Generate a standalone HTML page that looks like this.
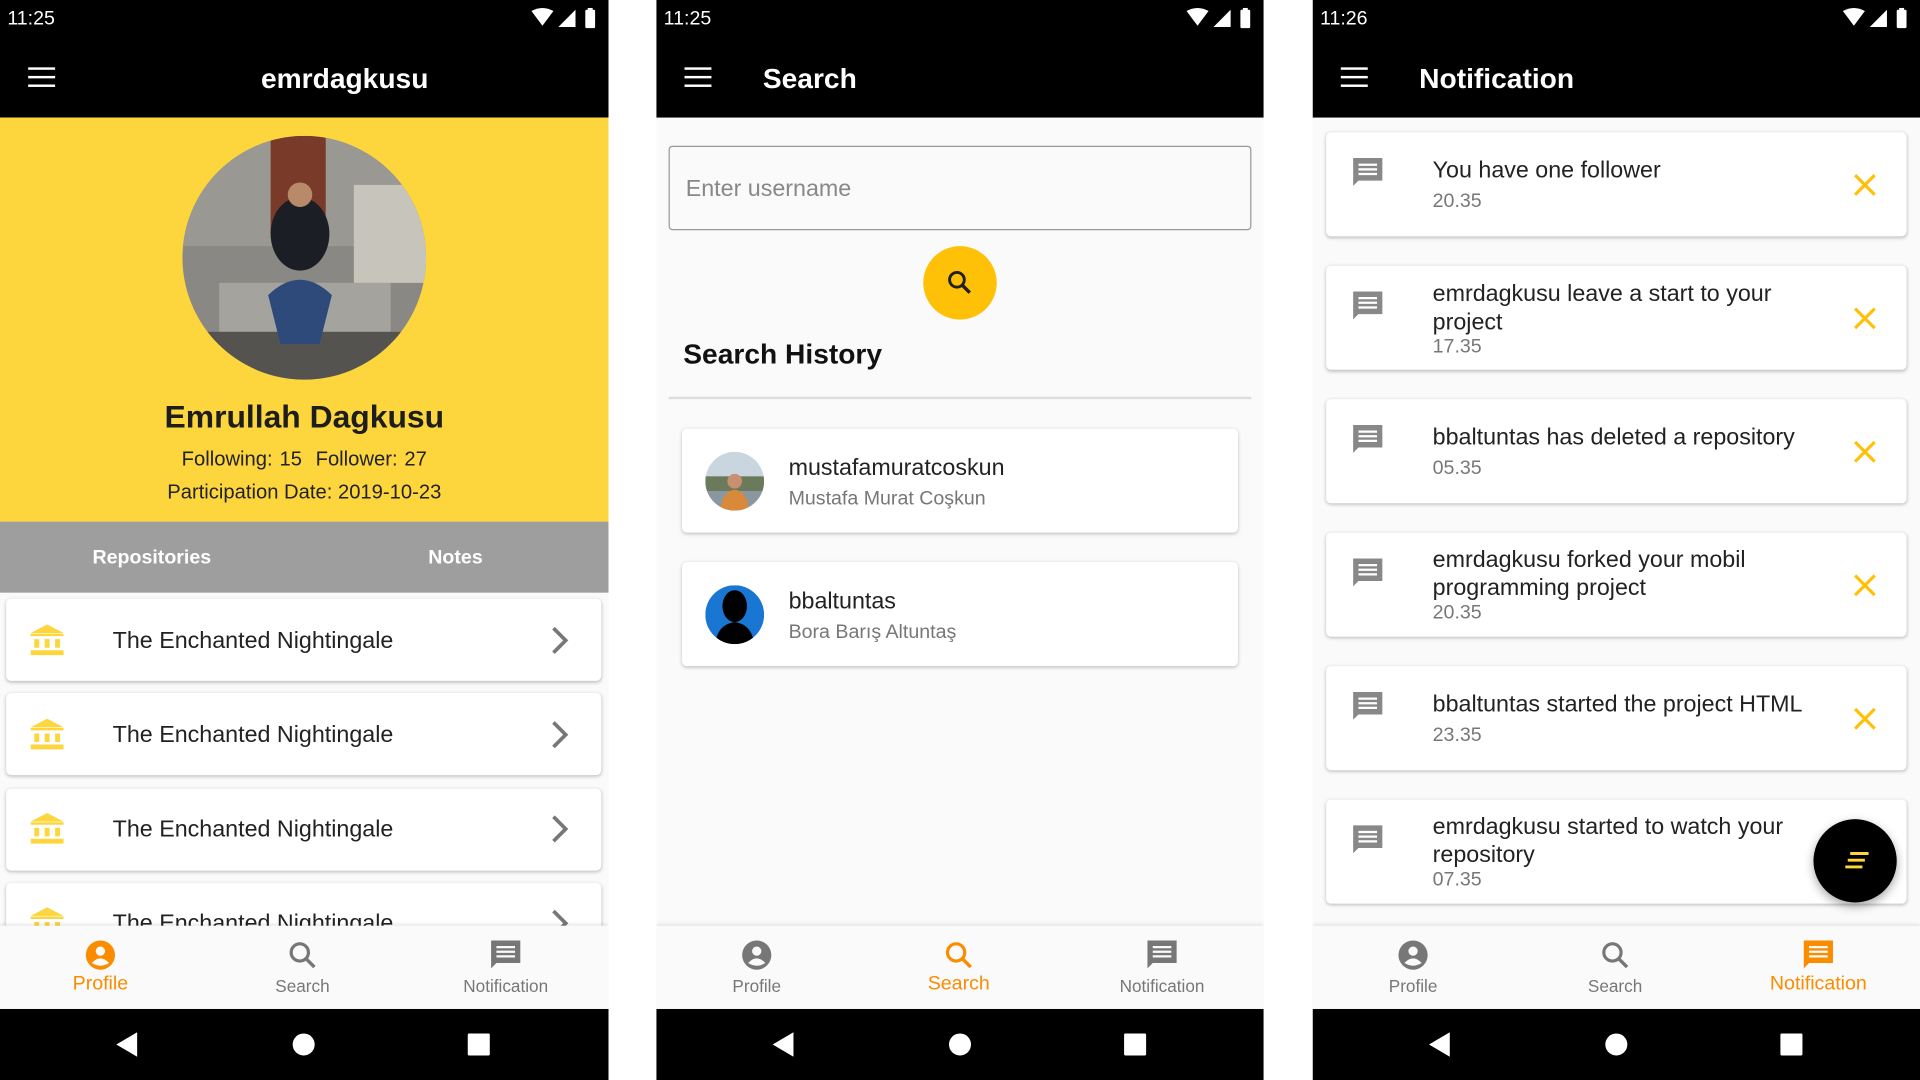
<!DOCTYPE html>
<html><head><meta charset="utf-8"><style>
*{margin:0;padding:0;box-sizing:border-box}
html,body{width:1920px;height:1080px;overflow:hidden;background:#fff;font-family:"Liberation Sans",Arial,sans-serif}
#w{position:absolute;left:0;top:0;width:1568px;height:882px;transform:scale(1.2244898);transform-origin:0 0}
.p{position:absolute;top:0;height:882px;width:497px;background:#fafafa;overflow:hidden}
.a{position:absolute}
.sb{position:absolute;left:0;top:0;width:100%;height:96px;background:#000}
.time{position:absolute;left:6px;top:7px;color:#fff;font-size:16px}
.ham{position:absolute;left:23px;top:55px;width:22px;height:16px}
.ham i{display:block;height:2.4px;background:#fff;margin-bottom:4.4px}
.title{position:absolute;top:48px;color:#fff;font-size:23px;font-weight:bold;line-height:32px}
.bn{position:absolute;left:0;top:756px;width:100%;height:68px;background:#fafafa;box-shadow:0 -1px 3px rgba(0,0,0,.12)}
.nv{position:absolute;left:0;top:824px;width:100%;height:58px;background:#000}
.it{position:absolute;top:0;width:120px;text-align:center;font-size:14px;color:#777}
.it svg{display:block;margin:11px auto 0}
.it span{display:block;margin-top:4px}
.on{color:#fb8c00;font-size:16px}
.on span{margin-top:2px}
.card{position:absolute;background:#fff;border-radius:4px;box-shadow:0 1px 3px rgba(0,0,0,.25)}
.t18{font-size:19px;color:#222;position:absolute;white-space:nowrap}
.g{color:#777;font-size:16px;position:absolute;white-space:nowrap}
</style></head><body><div id="w">

<!-- PANEL 1 -->
<div class="p" style="left:0">
<div class="sb"></div>
<div class="time">11:25</div>
<svg class="a" style="left:432px;top:6px" width="60" height="18" viewBox="0 0 60 18"><path d="M2 3 Q11 -2 20 3 L11 15Z" fill="#fff"/><path d="M38 2 V16 H24Z" fill="#fff"/><rect x="46" y="2" width="8" height="15" rx="1" fill="#fff"/><rect x="48" y="0.5" width="4" height="2" fill="#fff"/></svg>
<div class="ham"><i></i><i></i><i></i></div>
<div class="title" style="left:0;width:563px;text-align:center">emrdagkusu</div>
<div class="a" style="left:0;top:96px;width:497px;height:330px;background:#fdd63d"></div>
<svg class="a" style="left:149px;top:111px" width="199" height="199" viewBox="0 0 199 199">
<defs><clipPath id="c1"><circle cx="99.5" cy="99.5" r="99.5"/></clipPath></defs>
<g clip-path="url(#c1)"><rect width="199" height="199" fill="#8a8884"/><rect x="0" y="0" width="199" height="90" fill="#9a9893"/><rect x="72" y="0" width="45" height="80" fill="#7a3a2a"/><rect x="30" y="120" width="140" height="40" fill="#a5a39e"/><rect x="0" y="160" width="199" height="40" fill="#55534f"/><ellipse cx="96" cy="80" rx="24" ry="30" fill="#1c1e26"/><circle cx="96" cy="48" r="10" fill="#b88a6a"/><path d="M70 130 Q96 105 122 130 L112 170 L80 170Z" fill="#2d4a7a"/><rect x="140" y="40" width="59" height="80" fill="#c7c4bc"/></g></svg>
<div class="a" style="left:0;width:497px;top:325px;text-align:center;font-size:26px;font-weight:bold;color:#1d1d1d">Emrullah Dagkusu</div>
<div class="a" style="left:0;width:497px;top:366px;text-align:center;font-size:16.5px;color:#222;word-spacing:1px">Following: 15&nbsp; Follower: 27</div>
<div class="a" style="left:0;width:497px;top:393px;text-align:center;font-size:16.5px;color:#222">Participation Date: 2019-10-23</div>
<div class="a" style="left:0;top:426px;width:497px;height:58px;background:#9e9e9e"></div>
<div class="a" style="left:0;width:248px;top:447px;text-align:center;color:#fff;font-size:16px;font-weight:bold">Repositories</div>
<div class="a" style="left:248px;width:248px;top:447px;text-align:center;color:#fff;font-size:16px;font-weight:bold">Notes</div>
<div class="card" style="left:5px;top:489px;width:486px;height:67px"></div>
<div class="card" style="left:5px;top:566px;width:486px;height:67px"></div>
<div class="card" style="left:5px;top:644px;width:486px;height:67px"></div>
<div class="card" style="left:5px;top:721px;width:486px;height:67px"></div>
<svg class="a" style="left:25px;top:510px" width="27" height="26" viewBox="0 0 27 26"><path d="M13.5 0 L27 7 H0Z M0 7.5h27v2H0Z M3 12h4v7H3Z M11.5 12h4v7h-4Z M20 12h4v7h-4Z M0 21h27v4H0Z" fill="#fdd63d"/></svg>
<svg class="a" style="left:25px;top:587px" width="27" height="26" viewBox="0 0 27 26"><path d="M13.5 0 L27 7 H0Z M0 7.5h27v2H0Z M3 12h4v7H3Z M11.5 12h4v7h-4Z M20 12h4v7h-4Z M0 21h27v4H0Z" fill="#fdd63d"/></svg>
<svg class="a" style="left:25px;top:664px" width="27" height="26" viewBox="0 0 27 26"><path d="M13.5 0 L27 7 H0Z M0 7.5h27v2H0Z M3 12h4v7H3Z M11.5 12h4v7h-4Z M20 12h4v7h-4Z M0 21h27v4H0Z" fill="#fdd63d"/></svg>
<svg class="a" style="left:25px;top:741px" width="27" height="26" viewBox="0 0 27 26"><path d="M13.5 0 L27 7 H0Z M0 7.5h27v2H0Z M3 12h4v7H3Z M11.5 12h4v7h-4Z M20 12h4v7h-4Z M0 21h27v4H0Z" fill="#fdd63d"/></svg>
<div class="t18" style="left:92px;top:513px">The Enchanted Nightingale</div>
<div class="t18" style="left:92px;top:590px">The Enchanted Nightingale</div>
<div class="t18" style="left:92px;top:667px">The Enchanted Nightingale</div>
<div class="t18" style="left:92px;top:744px">The Enchanted Nightingale</div>
<svg class="a" style="left:448px;top:511px" width="20" height="24"><path d="M4 2 L14 12 L4 22" stroke="#777" stroke-width="3" fill="none"/></svg>
<svg class="a" style="left:448px;top:588px" width="20" height="24"><path d="M4 2 L14 12 L4 22" stroke="#777" stroke-width="3" fill="none"/></svg>
<svg class="a" style="left:448px;top:665px" width="20" height="24"><path d="M4 2 L14 12 L4 22" stroke="#777" stroke-width="3" fill="none"/></svg>
<svg class="a" style="left:448px;top:742px" width="20" height="24"><path d="M4 2 L14 12 L4 22" stroke="#777" stroke-width="3" fill="none"/></svg>
<div class="bn">
<div class="it on" style="left:22px"><svg width="26" height="26" viewBox="0 0 24 24"><circle cx="12" cy="12" r="11" fill="#fb8c00"/><circle cx="12" cy="9" r="3.5" fill="#fafafa"/><path d="M5.5 18 Q12 11 18.5 18 Q12 22 5.5 18Z" fill="#fafafa"/></svg><span>Profile</span></div>
<div class="it" style="left:187px"><svg width="26" height="26" viewBox="0 0 24 24"><circle cx="10" cy="10" r="6.5" stroke="#777" stroke-width="2.4" fill="none"/><path d="M15 15 L21 21" stroke="#777" stroke-width="2.6"/></svg><span>Search</span></div>
<div class="it" style="left:353px"><svg width="26" height="26" viewBox="0 0 24 24"><path d="M1 1h22v17H5l-4 4Z" fill="#777"/><path d="M5 6h14M5 9.5h14M5 13h14" stroke="#fafafa" stroke-width="1.7"/></svg><span>Notification</span></div>
</div>
<div class="nv"><svg class="a" style="left:93px;top:18px" width="320" height="22"><path d="M2 11 L19 1 V21Z" fill="#fff"/><circle cx="155" cy="11" r="9" fill="#fff"/><rect x="289" y="2" width="18" height="18" rx="1" fill="#fff"/></svg></div>
</div>

<!-- PANEL 2 -->
<div class="p" style="left:536px;width:496px">
<div class="sb"></div>
<div class="time">11:25</div>
<svg class="a" style="left:431px;top:6px" width="60" height="18" viewBox="0 0 60 18"><path d="M2 3 Q11 -2 20 3 L11 15Z" fill="#fff"/><path d="M38 2 V16 H24Z" fill="#fff"/><rect x="46" y="2" width="8" height="15" rx="1" fill="#fff"/><rect x="48" y="0.5" width="4" height="2" fill="#fff"/></svg>
<div class="ham"><i></i><i></i><i></i></div>
<div class="title" style="left:87px">Search</div>
<div class="a" style="left:10px;top:119px;width:476px;height:69px;border:1.5px solid #999;border-radius:3px"></div>
<div class="a" style="left:24px;top:144px;font-size:19px;color:#888">Enter username</div>
<div class="a" style="left:218px;top:201px;width:60px;height:60px;border-radius:50%;background:#ffc107"></div>
<svg class="a" style="left:236px;top:219px" width="24" height="24" viewBox="0 0 24 24"><circle cx="9.5" cy="9.5" r="6" stroke="#222" stroke-width="2.4" fill="none"/><path d="M14 14 L20 20" stroke="#222" stroke-width="2.8"/></svg>
<div class="a" style="left:22px;top:276px;font-size:23px;font-weight:bold;color:#111">Search History</div>
<div class="a" style="left:10px;top:324px;width:476px;height:2px;background:#ddd"></div>
<div class="card" style="left:21px;top:350px;width:454px;height:85px"></div>
<div class="card" style="left:21px;top:459px;width:454px;height:85px"></div>
<svg class="a" style="left:40px;top:369px" width="48" height="48" viewBox="0 0 48 48"><defs><clipPath id="c2"><circle cx="24" cy="24" r="24"/></clipPath></defs><g clip-path="url(#c2)"><rect width="48" height="48" fill="#c9d6df"/><rect y="20" width="48" height="12" fill="#6b7a5a"/><rect y="32" width="48" height="16" fill="#8a97a0"/><circle cx="24" cy="24" r="6" fill="#c89070"/><path d="M12 48 Q14 32 24 31 Q34 32 36 48Z" fill="#d88a3a"/></g></svg>
<svg class="a" style="left:40px;top:478px" width="48" height="48" viewBox="0 0 48 48"><defs><clipPath id="c3"><circle cx="24" cy="24" r="24"/></clipPath></defs><g clip-path="url(#c3)"><rect width="48" height="48" fill="#1976d2"/><ellipse cx="24" cy="17" rx="10" ry="13" fill="#000"/><path d="M8 48 Q10 32 24 30 Q38 32 40 48Z" fill="#000"/></g></svg>
<div class="t18" style="left:108px;top:372px">mustafamuratcoskun</div>
<div class="g" style="left:108px;top:399px">Mustafa Murat Coşkun</div>
<div class="t18" style="left:108px;top:481px">bbaltuntas</div>
<div class="g" style="left:108px;top:508px">Bora Barış Altuntaş</div>
<div class="bn">
<div class="it" style="left:22px"><svg width="26" height="26" viewBox="0 0 24 24"><circle cx="12" cy="12" r="11" fill="#777"/><circle cx="12" cy="9" r="3.5" fill="#fafafa"/><path d="M5.5 18 Q12 11 18.5 18 Q12 22 5.5 18Z" fill="#fafafa"/></svg><span>Profile</span></div>
<div class="it on" style="left:187px"><svg width="26" height="26" viewBox="0 0 24 24"><circle cx="10" cy="10" r="6.5" stroke="#fb8c00" stroke-width="2.4" fill="none"/><path d="M15 15 L21 21" stroke="#fb8c00" stroke-width="2.6"/></svg><span>Search</span></div>
<div class="it" style="left:353px"><svg width="26" height="26" viewBox="0 0 24 24"><path d="M1 1h22v17H5l-4 4Z" fill="#777"/><path d="M5 6h14M5 9.5h14M5 13h14" stroke="#fafafa" stroke-width="1.7"/></svg><span>Notification</span></div>
</div>
<div class="nv"><svg class="a" style="left:93px;top:18px" width="320" height="22"><path d="M2 11 L19 1 V21Z" fill="#fff"/><circle cx="155" cy="11" r="9" fill="#fff"/><rect x="289" y="2" width="18" height="18" rx="1" fill="#fff"/></svg></div>
</div>

<!-- PANEL 3 -->
<div class="p" style="left:1072px;width:496px">
<div class="sb"></div>
<div class="time">11:26</div>
<svg class="a" style="left:431px;top:6px" width="60" height="18" viewBox="0 0 60 18"><path d="M2 3 Q11 -2 20 3 L11 15Z" fill="#fff"/><path d="M38 2 V16 H24Z" fill="#fff"/><rect x="46" y="2" width="8" height="15" rx="1" fill="#fff"/><rect x="48" y="0.5" width="4" height="2" fill="#fff"/></svg>
<div class="ham"><i></i><i></i><i></i></div>
<div class="title" style="left:87px">Notification</div>

<div class="card" style="left:11px;top:108px;width:474px;height:85px"></div>
<div class="card" style="left:11px;top:217px;width:474px;height:85px"></div>
<div class="card" style="left:11px;top:326px;width:474px;height:85px"></div>
<div class="card" style="left:11px;top:435px;width:474px;height:85px"></div>
<div class="card" style="left:11px;top:544px;width:474px;height:85px"></div>
<div class="card" style="left:11px;top:653px;width:474px;height:85px"></div>

<svg class="a" style="left:32px;top:128px" width="26" height="26" viewBox="0 0 24 24"><path d="M1 1h22v17H5l-4 4Z" fill="#888"/><path d="M5 6h14M5 9.5h14M5 13h14" stroke="#fff" stroke-width="1.7"/></svg>
<svg class="a" style="left:32px;top:237px" width="26" height="26" viewBox="0 0 24 24"><path d="M1 1h22v17H5l-4 4Z" fill="#888"/><path d="M5 6h14M5 9.5h14M5 13h14" stroke="#fff" stroke-width="1.7"/></svg>
<svg class="a" style="left:32px;top:346px" width="26" height="26" viewBox="0 0 24 24"><path d="M1 1h22v17H5l-4 4Z" fill="#888"/><path d="M5 6h14M5 9.5h14M5 13h14" stroke="#fff" stroke-width="1.7"/></svg>
<svg class="a" style="left:32px;top:455px" width="26" height="26" viewBox="0 0 24 24"><path d="M1 1h22v17H5l-4 4Z" fill="#888"/><path d="M5 6h14M5 9.5h14M5 13h14" stroke="#fff" stroke-width="1.7"/></svg>
<svg class="a" style="left:32px;top:564px" width="26" height="26" viewBox="0 0 24 24"><path d="M1 1h22v17H5l-4 4Z" fill="#888"/><path d="M5 6h14M5 9.5h14M5 13h14" stroke="#fff" stroke-width="1.7"/></svg>
<svg class="a" style="left:32px;top:673px" width="26" height="26" viewBox="0 0 24 24"><path d="M1 1h22v17H5l-4 4Z" fill="#888"/><path d="M5 6h14M5 9.5h14M5 13h14" stroke="#fff" stroke-width="1.7"/></svg>

<div class="t18" style="left:98px;top:129px">You have one follower</div>
<div class="g" style="left:98px;top:156px">20.35</div>
<div class="t18" style="left:98px;top:229px;line-height:23px">emrdagkusu leave a start to your<br>project</div>
<div class="g" style="left:98px;top:275px">17.35</div>
<div class="t18" style="left:98px;top:347px">bbaltuntas has deleted a repository</div>
<div class="g" style="left:98px;top:374px">05.35</div>
<div class="t18" style="left:98px;top:446px;line-height:23px">emrdagkusu forked your mobil<br>programming project</div>
<div class="g" style="left:98px;top:492px">20.35</div>
<div class="t18" style="left:98px;top:565px">bbaltuntas started the project HTML</div>
<div class="g" style="left:98px;top:592px">23.35</div>
<div class="t18" style="left:98px;top:664px;line-height:23px">emrdagkusu started to watch your<br>repository</div>
<div class="g" style="left:98px;top:710px">07.35</div>

<svg class="a" style="left:441px;top:141px" width="20" height="20"><path d="M2 2L18 18M18 2L2 18" stroke="#ffc107" stroke-width="2.6"/></svg>
<svg class="a" style="left:441px;top:250px" width="20" height="20"><path d="M2 2L18 18M18 2L2 18" stroke="#ffc107" stroke-width="2.6"/></svg>
<svg class="a" style="left:441px;top:359px" width="20" height="20"><path d="M2 2L18 18M18 2L2 18" stroke="#ffc107" stroke-width="2.6"/></svg>
<svg class="a" style="left:441px;top:468px" width="20" height="20"><path d="M2 2L18 18M18 2L2 18" stroke="#ffc107" stroke-width="2.6"/></svg>
<svg class="a" style="left:441px;top:577px" width="20" height="20"><path d="M2 2L18 18M18 2L2 18" stroke="#ffc107" stroke-width="2.6"/></svg>

<div class="a" style="left:409px;top:669px;width:68px;height:68px;border-radius:50%;background:#000;box-shadow:0 3px 8px rgba(0,0,0,.35)"></div>
<svg class="a" style="left:432px;top:694px" width="24" height="18"><path d="M7 3h15M5 8.5h14M3 14h14" stroke="#fdd63d" stroke-width="2.4"/></svg>

<div class="bn">
<div class="it" style="left:22px"><svg width="26" height="26" viewBox="0 0 24 24"><circle cx="12" cy="12" r="11" fill="#777"/><circle cx="12" cy="9" r="3.5" fill="#fafafa"/><path d="M5.5 18 Q12 11 18.5 18 Q12 22 5.5 18Z" fill="#fafafa"/></svg><span>Profile</span></div>
<div class="it" style="left:187px"><svg width="26" height="26" viewBox="0 0 24 24"><circle cx="10" cy="10" r="6.5" stroke="#777" stroke-width="2.4" fill="none"/><path d="M15 15 L21 21" stroke="#777" stroke-width="2.6"/></svg><span>Search</span></div>
<div class="it on" style="left:353px"><svg width="26" height="26" viewBox="0 0 24 24"><path d="M1 1h22v17H5l-4 4Z" fill="#fb8c00"/><path d="M5 6h14M5 9.5h14M5 13h14" stroke="#fafafa" stroke-width="1.7"/></svg><span>Notification</span></div>
</div>
<div class="nv"><svg class="a" style="left:93px;top:18px" width="320" height="22"><path d="M2 11 L19 1 V21Z" fill="#fff"/><circle cx="155" cy="11" r="9" fill="#fff"/><rect x="289" y="2" width="18" height="18" rx="1" fill="#fff"/></svg></div>
</div>

</div></body></html>
